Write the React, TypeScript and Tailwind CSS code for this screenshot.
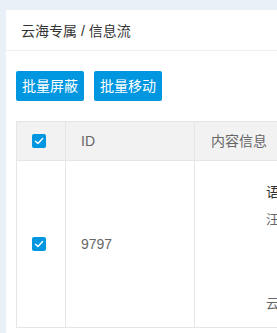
import React from "react";

function Check() {
  return (
    <span className="grid size-[14px] place-items-center rounded-[2px] bg-[#0096e0]">
      <svg viewBox="0 0 14 14" className="size-[14px]" fill="none">
        <path d="M3.5 7.2 6 9.5 10.6 4.6" stroke="#fff" strokeWidth="1.4" strokeLinecap="round" strokeLinejoin="round" />
      </svg>
    </span>
  );
}

export default function App() {
  return (
    <div
      className="h-[333px] w-[277px] overflow-hidden bg-[#e9f0f8] pl-[6px] pt-[10px]"
      style={{ fontFamily: '"Liberation Sans", "Noto Sans CJK SC", sans-serif' }}
    >
      <div className="h-[400px] w-[600px] bg-white">
        <div className="flex h-[41px] items-center border-b border-[#f0f0f0] pl-[15px] pt-[3px] text-[14px] text-[#333]">
          云海专属 / 信息流
        </div>
        <div className="flex gap-[10px] pl-[10px] pt-[20px]">
          <button className="h-[30px] w-[68px] rounded-[2px] bg-[#0096e0] text-[14px] text-white">批量屏蔽</button>
          <button className="h-[30px] w-[68px] rounded-[2px] bg-[#0096e0] text-[14px] text-white">批量移动</button>
        </div>
        <div className="ml-[10px] mt-[20px] w-[500px] border-l border-t border-[#e6e6e6]">
          <div className="grid h-[39px] grid-cols-[49px_129px_1fr] border-b border-[#e6e6e6] bg-[#f2f2f2] text-[14px] text-[#666]">
            <div className="flex items-center border-r border-[#e6e6e6] pl-[15px]">
              <Check />
            </div>
            <div className="flex items-center border-r border-[#e6e6e6] pl-[15px]">ID</div>
            <div className="flex items-center pl-[16px]">内容信息</div>
          </div>
          <div className="grid h-[167px] grid-cols-[49px_129px_1fr] border-b border-[#e6e6e6] text-[14px] text-[#666]">
            <div className="flex items-center border-r border-[#e6e6e6] pl-[15px]">
              <Check />
            </div>
            <div className="flex items-center border-r border-[#e6e6e6] pl-[15px]">9797</div>
            <div className="flex flex-col pl-[71px] pt-[21px]">
              <div className="text-[14px] leading-[20px] text-[#333]">语音直播</div>
              <div className="mt-[9px] text-[13px] leading-[18px] text-[#666]">汪汪汪</div>
              <div className="mt-[66px] text-[13px] leading-[18px] text-[#666]">云海专属</div>
            </div>
          </div>
        </div>
      </div>
    </div>
  );
}
